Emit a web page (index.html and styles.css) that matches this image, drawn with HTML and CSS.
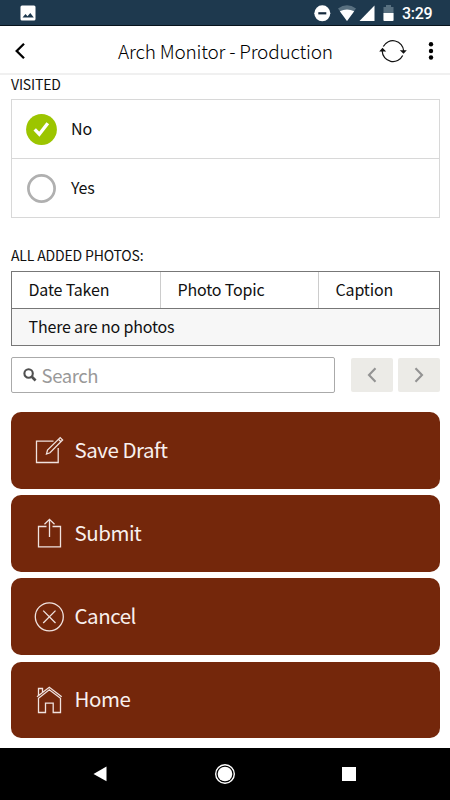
FILE: index.html
```
<!DOCTYPE html>
<html lang="en">
<head>
<meta charset="utf-8">
<title>Arch Monitor - Production</title>
<link rel="stylesheet" href="styles.css">
</head>
<body>
<div class="status">
  <svg class="picture" width="16" height="16" viewBox="0 0 16 16"><rect x=".5" y=".5" width="15" height="15" rx="1.5" fill="#fff"/><path d="M2.500 12.500 5.500 9l2 2.200L10.300 8l3.500 4.500z" fill="#1e394e"/></svg>
  <svg class="tray" width="82" height="18" viewBox="0 0 82 18">
    <circle cx="9.300" cy="9.300" r="8" fill="#fff"/><path d="M5.300 9.300h8" stroke="#15293c" stroke-width="2.200"/>
    <path d="M25 4.500q9-6.500 18 0L34 17z" fill="#587080"/><path d="M26.800 7.200q7.200-3.600 14.400 0L34 17z" fill="#fff"/>
    <path d="M61.500 1.500V17H46.500z" fill="#fff"/>
    <path d="M70.500 3H73V1h5v2h2.500v14h-10z" fill="#587080"/><path d="M70.500 9h10v7q0 1-1 1h-8q-1 0-1-1z" fill="#fff"/>
  </svg>
  <span class="time">3:29</span>
</div>
<header class="bar">
  <svg class="back" width="12" height="18" viewBox="0 0 12 18"><path d="M10 1.800 2.700 9l7.300 7.200" fill="none" stroke="#000" stroke-width="2.300"/></svg>
  <h1><span>Arch Monitor - Production</span></h1>
  <svg class="refresh" width="28" height="24" viewBox="0 0 28 24"><g fill="none" stroke="#111" stroke-width="1.200"><path d="M4.300 7.600A10.800 10.800 0 0 1 24.700 12"/><path d="M23.700 16.500A10.800 10.800 0 0 1 3.200 12"/></g><path d="M20.800 11.300h7l-3.300 3.500zM.2 12.500h7L3.500 8.700z" fill="#111"/></svg>
  <svg class="more" width="6" height="20" viewBox="0 0 6 20"><g fill="#000"><circle cx="3" cy="3.300" r="2.200"/><circle cx="3" cy="10" r="2.200"/><circle cx="3" cy="16.500" r="2.200"/></g></svg>
</header>
<main>
  <h2 class="label visited"><span>VISITED</span></h2>
  <div class="choices">
    <div class="choice"><svg width="32" height="32" viewBox="0 0 32 32"><circle cx="15.500" cy="16.500" r="15.400" fill="#9cc500"/><path d="m8.700 16.400 4.600 4.800 8.500-11" fill="none" stroke="#fff" stroke-width="3.400"/></svg><span>No</span></div>
    <div class="choice"><svg width="32" height="32" viewBox="0 0 32 32"><circle cx="15.500" cy="16.500" r="13.100" fill="none" stroke="#b0b0b0" stroke-width="2.700"/></svg><span>Yes</span></div>
  </div>
  <h2 class="label photos"><span>ALL ADDED PHOTOS:</span></h2>
  <div class="table">
    <div class="head"><div><span>Date Taken</span></div><div><span>Photo Topic</span></div><div><span>Caption</span></div></div>
    <div class="empty"><span>There are no photos</span></div>
  </div>
  <div class="tools">
    <div class="search"><svg width="14" height="14" viewBox="0 0 14 14"><circle cx="5.600" cy="5.500" r="4.200" fill="none" stroke="#505050" stroke-width="2.100"/><path d="m8.800 8.800 3.800 3.600" stroke="#505050" stroke-width="2.700"/></svg><span>Search</span></div>
    <div class="page"><svg width="10" height="16" viewBox="0 0 10 16"><path d="M8.500 1.300 2 8l6.500 6.700"/></svg></div>
    <div class="page"><svg width="10" height="16" viewBox="0 0 10 16"><path d="M1.500 1.300 8 8l-6.500 6.700"/></svg></div>
  </div>
  <div class="actions">
    <div class="action"><svg width="32" height="32" viewBox="0 0 32 32"><path d="M20.500 7.200H3.500v21.300h21.700V14M13.500 20l1-4L27.200 3.600l2.400 2.400L17 18.800zM25.500 5.300l2.400 2.400"/></svg><span>Save Draft</span></div>
    <div class="action"><svg width="32" height="32" viewBox="0 0 32 32"><path d="M13.500 9.500h-8v20.300h22V9.500h-8M16.500 20V2.500M11.500 7.300l5-5 5 5"/></svg><span>Submit</span></div>
    <div class="action"><svg width="32" height="32" viewBox="0 0 32 32"><circle cx="16.300" cy="15.800" r="14"/><path d="m10.200 9.600 12.300 12.400M22.500 9.600 10.200 22"/></svg><span>Cancel</span></div>
    <div class="action"><svg width="32" height="32" viewBox="0 0 32 32"><path d="M5.500 14.300v14.200h7v-9.300h7.700v9.300h7.300V14.300L16.300 5.800zM4 12.800 16.300 3.200l12.400 9.600M5.500 11.500v-7h4v3.800"/></svg><span>Home</span></div>
  </div>
</main>
<nav>
  <svg width="14" height="16" viewBox="0 0 14 16"><path d="M13.500 .5v14.700L.5 8z" fill="#fff"/></svg>
  <svg width="22" height="22" viewBox="0 0 22 22"><circle cx="11" cy="11" r="9.300" fill="none" stroke="#fff" stroke-width="1.400"/><circle cx="11" cy="11" r="7.300" fill="#fff"/></svg>
  <svg width="14" height="14" viewBox="0 0 14 14"><path d="M0 0h14v14H0z" fill="#fff"/></svg>
</nav>
</body>
</html>
```
FILE: styles.css
```
* { box-sizing: border-box; }
body { margin: 0; width: 450px; height: 800px; overflow: hidden; background: #fff; color: #111; font-family: "Noto Sans CJK SC", "Noto Sans", sans-serif; font-size: 16px; line-height: 24px; letter-spacing: -.17px; }
svg { display: block; flex: none; }
h1, h2 { margin: 0; font-weight: 400; }
span { white-space: nowrap; }
.status { height: 26px; background: #1e394e; border-bottom: 1px solid #07131c; display: flex; align-items: center; padding: 1px 17px 0 20px; }
.tray { margin-left: auto; }
.time { font: 500 16px/22px Roboto, sans-serif; color: #fff; width: 31px; margin-left: 7px; letter-spacing: -.3px; padding-top: 1px; }
.bar { height: 49px; border-bottom: 2px solid #f0f0f0; display: flex; align-items: center; padding: 2px 16px 0 14px; }
.bar h1 { font-size: 19px; font-weight: 300; width: 216px; margin-left: 92px; margin-right: auto; color: #000; letter-spacing: -.2px; }
.refresh { margin-right: 21px; }
main { padding: 0 10px 0 11px; }
.label { font-size: 14px; line-height: 20px; }
.visited { height: 24px; line-height: 18px; }
.choices { height: 119px; border: 1px solid #d8d8d8; }
.choice { height: 58px; display: flex; align-items: center; gap: 13px; padding: 0 0 0 14px; }
.choice + .choice { border-top: 1px solid #d8d8d8; height: 59px; }
.choice span { padding-bottom: 2px; }
.photos { padding-top: 27px; height: 53px; }
.table { height: 75px; border: 1px solid #777; }
.head { display: grid; grid-template-columns: 148px 158px 1fr; height: 37px; border-bottom: 1px solid #777; }
.head div { padding: 5px 0 0 16.5px; border-left: 1px solid #ccc; }
.head div:first-child { border-left: 0; }
.empty { height: 36px; background: #f7f7f7; padding: 5px 16.5px; }
.tools { display: flex; align-items: center; margin-top: 11px; height: 36px; }
.search { width: 324px; height: 36px; border: 1px solid #aaa; border-radius: 2px; display: flex; align-items: center; gap: 4.5px; padding-left: 11px; margin-right: 16px; font-size: 18.5px; color: #999; letter-spacing: -.4px; }
.page { width: 42px; height: 34px; background: #ecebe7; border-radius: 2px; display: flex; align-items: center; justify-content: center; }
.page + .page { margin-left: 5px; }
.page path { fill: none; stroke: #939393; stroke-width: 2.1; }
.actions { display: flex; flex-direction: column; gap: 6.7px; margin-top: 19px; }
.action { height: 76.5px; background: #74270b; border-radius: 10px; display: flex; align-items: center; gap: 9.5px; padding-left: 22px; color: #f8f0ee; font-size: 20.5px; letter-spacing: -.48px; }
.action span { padding-bottom: 3px; }
.action svg { fill: none; stroke: #f0e2df; stroke-width: 1.3; }
nav { height: 53px; margin-top: 9.5px; background: #000; display: flex; align-items: center; justify-content: space-between; padding: 0 94px 1px 93px; }
```
